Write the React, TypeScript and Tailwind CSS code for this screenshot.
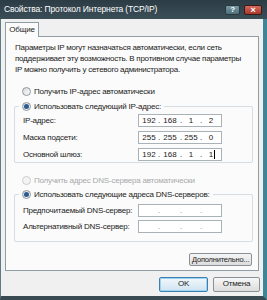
import React from 'react';

const font = { fontFamily: '"Liberation Sans", Arial, sans-serif' };

const Radio = ({ checked, disabled }: { checked?: boolean; disabled?: boolean }) => (
  <span
    className={`inline-flex items-center justify-center w-[9px] h-[9px] rounded-full border ${
      disabled ? 'border-[#c9ccce] bg-[#f4f4f4]' : 'border-[#8e979c] bg-gradient-to-br from-[#d8dadb] to-[#fbfbfb]'
    }`}
  >
    {checked && <span className="w-[5px] h-[5px] rounded-full bg-[#2a5c8f]" />}
  </span>
);

const IpField = ({ parts, caret, empty }: { parts: string[]; caret?: boolean; empty?: boolean }) => (
  <div
    className={`w-[84px] h-[13px] border border-[#a9b2b7] bg-white flex items-center pl-[3px] text-[8px] tracking-normal ${
      empty ? 'text-[#8a8a8a]' : 'text-[#222]'
    }`}
  >
    <span className="w-[14px] text-center">{parts[0]}</span>
    <span className="w-[6px] text-center">.</span>
    <span className="w-[16px] text-center">{parts[1]}</span>
    <span className="w-[6px] text-center">.</span>
    <span className="w-[14px] text-center">{parts[2]}</span>
    <span className="w-[6px] text-center">.</span>
    <span className="w-[14px] text-center relative">
      {parts[3]}
      {caret && <span className="absolute left-[10px] top-[1px] w-px h-[9px] bg-black" />}
    </span>
  </div>
);

const Row = ({ label, parts, caret }: { label: string; parts?: string[]; caret?: boolean }) => (
  <div className="flex items-center justify-between h-[13px] pl-[8px] pr-[30px]">
    <span className="text-[8px] text-[#222]">{label}</span>
    <IpField parts={parts ?? ['', '', '', '']} caret={caret} empty={!parts} />
  </div>
);

export default function App() {
  return (
    <div style={font} className="w-[267px] h-[300px] flex flex-col bg-[#2f414b] overflow-hidden tracking-[-0.2px]">
      {/* title bar */}
      <div className="h-[19px] flex items-center pl-[4px] pr-[5px] bg-gradient-to-b from-[#2c3c45] to-[#3b4e58]">
        <span className="text-[8.5px] text-white flex-1 whitespace-nowrap tracking-[-0.15px]">Свойства: Протокол Интернета (TCP/IP)</span>
        <div className="w-[15px] h-[10px] rounded-[2px] border border-[#28393f] bg-gradient-to-b from-[#7b9aa4] to-[#4d6f7a] text-white text-[8px] font-bold leading-[8px] flex items-center justify-center mr-[4px]">
          ?
        </div>
        <div className="w-[18px] h-[10px] rounded-[2px] border border-[#3d1a16] bg-gradient-to-b from-[#d46a5e] to-[#a8352b] text-white text-[9px] font-bold leading-[8px] flex items-center justify-center">
          ×
        </div>
      </div>

      {/* body */}
      <div className="flex-1 flex flex-col bg-[#f0f0f0] border-l border-[#5d7c88] border-r-[4px] border-r-[#3d8597] border-b-[4px] border-b-[#3a4a52] pl-[4px] pr-[1px]">
        {/* tab header */}
        <div className="h-[15px] mt-[2px] flex items-end">
          <div className="h-[15px] w-[34px] -mb-px relative z-10 bg-[#fbfbfb] border border-b-0 border-[#8f9ea5] text-[8px] text-[#222] flex items-center justify-center">
            Общие
          </div>
        </div>

        {/* tab panel */}
        <div className="h-[235px] w-[254px] bg-[#fbfbfb] border border-[#8f9ea5] flex flex-col pl-[8px] pr-[5px]">
          <p className="mt-[5px] text-[8px] leading-[11px] text-[#222] pl-[1px] whitespace-nowrap tracking-[-0.25px]">
            Параметры IP могут назначаться автоматически, если сеть
            <br />
            поддерживает эту возможность. В противном случае параметры
            <br />
            IP можно получить у сетевого администратора.
          </p>

          <div className="mt-[11px] flex items-center gap-[3px] pl-[8px] h-[11px]">
            <Radio />
            <span className="text-[8px] text-[#222]">Получить IP-адрес автоматически</span>
          </div>

          {/* group 1 */}
          <div className="relative mt-[9px] h-[57px] border border-[#d5dde2] rounded-[2px] pt-[7px] flex flex-col gap-[4px]">
            <div className="absolute -top-[6px] left-[4px] flex items-center gap-[3px] bg-[#fbfbfb] px-[3px] h-[11px]">
              <Radio checked />
              <span className="text-[8px] text-[#222]">Использовать следующий IP-адрес:</span>
            </div>
            <Row label="IP-адрес:" parts={['192', '168', '1', '2']} />
            <Row label="Маска подсети:" parts={['255', '255', '255', '0']} />
            <Row label="Основной шлюз:" parts={['192', '168', '1', '1']} caret />
          </div>

          <div className="mt-[12px] flex items-center gap-[3px] pl-[8px] h-[11px]">
            <Radio disabled />
            <span className="text-[8px] text-[#a7a9aa]">Получить адрес DNS-сервера автоматически</span>
          </div>

          {/* group 2 */}
          <div className="relative mt-[8px] h-[48px] border border-[#d5dde2] rounded-[2px] pt-[9px] flex flex-col gap-[3px]">
            <div className="absolute -top-[6px] left-[4px] flex items-center gap-[3px] bg-[#fbfbfb] px-[3px] h-[11px]">
              <Radio checked />
              <span className="text-[8px] text-[#222]">Использовать следующие адреса DNS-серверов:</span>
            </div>
            <Row label="Предпочитаемый DNS-сервер:" />
            <Row label="Альтернативный DNS-сервер:" />
          </div>

          <div className="mt-[11px] flex justify-end pr-[1px]">
            <div className="w-[63px] h-[13px] rounded-[2px] border border-[#8a9196] bg-gradient-to-b from-[#f7f7f7] to-[#dcdcdc] text-[7.5px] text-[#222] flex items-center justify-center">
              Дополнительно...
            </div>
          </div>
        </div>

        {/* footer */}
        <div className="flex-1 flex items-center justify-end gap-[5px] pr-[2px] pt-[1px]">
          <div className="w-[49px] h-[15px] rounded-[2px] border border-[#3c7fb1] bg-gradient-to-b from-[#f2f8fc] to-[#cfe3f0] text-[8px] text-[#222] flex items-center justify-center shadow-[inset_0_0_0_1px_#9ed3f2]">
            OK
          </div>
          <div className="w-[47px] h-[15px] rounded-[2px] border border-[#8a9196] bg-gradient-to-b from-[#f7f7f7] to-[#dcdcdc] text-[8px] text-[#222] flex items-center justify-center">
            Отмена
          </div>
        </div>
      </div>
    </div>
  );
}
